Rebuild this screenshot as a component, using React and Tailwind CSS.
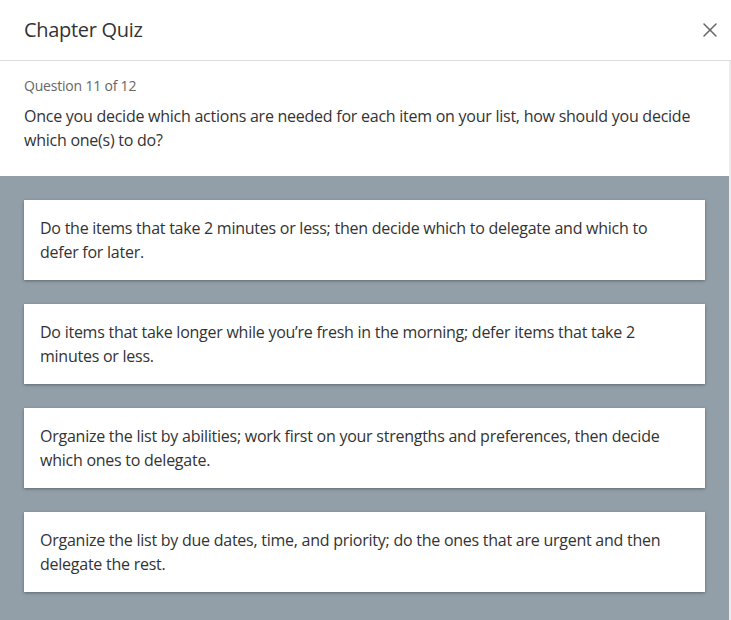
import { X } from "lucide-react";

const answers = [
  "Do the items that take 2 minutes or less; then decide which to delegate and which to defer for later.",
  "Do items that take longer while you\u2019re fresh in the morning; defer items that take 2 minutes or less.",
  "Organize the list by abilities; work first on your strengths and preferences, then decide which ones to delegate.",
  "Organize the list by due dates, time, and priority; do the ones that are urgent and then delegate the rest.",
];

export default function App() {
  return (
    <div
      className="w-[731px] h-[620px] overflow-hidden bg-white flex flex-col text-[#333]"
      style={{ fontFamily: '"Open Sans", "Noto Sans", sans-serif' }}
    >
      {/* header */}
      <div className="h-[61px] shrink-0 flex items-center justify-between pl-6 pr-[9px] border-b border-[#dcdcdc]">
        <h1 className="text-[20px] leading-none text-[#333] tracking-[-0.3px]">Chapter Quiz</h1>
        <X size={24} strokeWidth={1.5} className="text-[#666]" />
      </div>

      <div className="flex flex-1 min-h-0">
        <div className="flex-1 flex flex-col">
          {/* question */}
          <div className="px-6 pt-[15px] pb-[24px]">
            <div className="text-[14px] leading-[20px] text-[#666] tracking-[-0.2px]">Question 11 of 12</div>
            <p className="mt-[8px] text-[16px] leading-6 tracking-[-0.25px] text-[#333]">
              Once you decide which actions are needed for each item on your list, how should you decide which one(s) to do?
            </p>
          </div>

          {/* answers */}
          <div className="flex-1 bg-[#929fa9] px-6 pt-6 flex flex-col gap-6">
            {answers.map((a) => (
              <button
                key={a}
                className="text-left bg-white px-4 py-4 shadow-[0_1px_3px_rgba(0,0,0,0.35)] text-[16px] leading-6 tracking-[-0.25px] text-[#333]"
              >
                {a}
              </button>
            ))}
          </div>
        </div>
        <div className="w-[2px] bg-[#ececec]" />
      </div>
    </div>
  );
}
